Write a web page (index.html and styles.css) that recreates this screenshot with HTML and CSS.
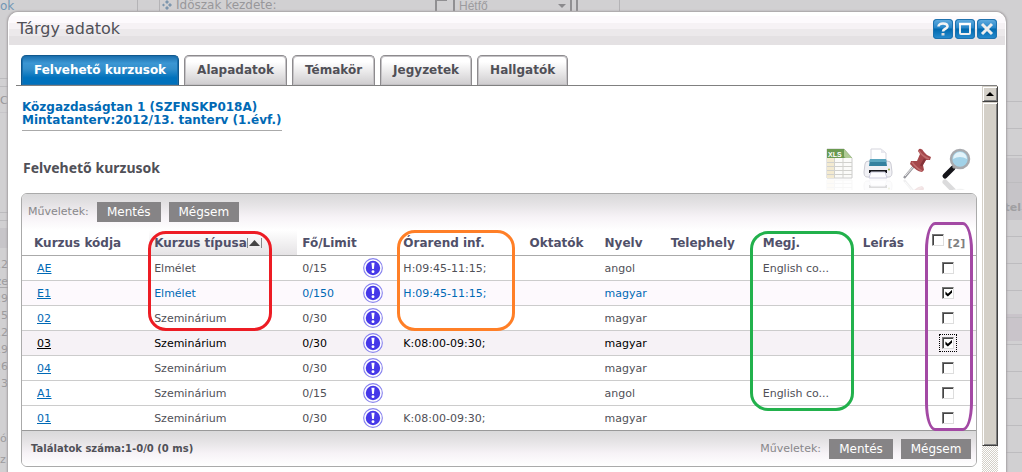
FILE: index.html
```html
<!DOCTYPE html>
<html lang="hu">
<head>
<meta charset="utf-8">
<title>Tárgy adatok</title>
<link rel="stylesheet" href="styles.css">
</head>
<body>
<svg class="defs" aria-hidden="true">
  <symbol id="alert" viewBox="0 0 18 18">
    <circle cx="9" cy="9" r="8.4" fill="#fff" stroke="#8883ee"/>
    <circle cx="9" cy="9" r="6.5" fill="#4638e8"/>
    <path d="M7.6 4.2h2.8L9.8 10H8.2z" fill="#fff"/><circle cx="9" cy="12.3" r="1.3" fill="#fff"/>
  </symbol>
</svg>
<div class="backdrop" aria-hidden="true">
  <span class="ghost blue g-ok">ok</span>
  <span class="vline v1"></span><span class="vline v2"></span>
  <svg class="diamond" viewBox="0 0 10 10"><path d="M5 0l2 2-2 2-2-2zM8 3l2 2-2 2-2-2zM5 6l2 2-2 2-2-2zM1.500 3.500l1.500 1.500-1.500 1.500L0 5z" fill="#7d96ad"/></svg>
  <span class="ghost g-start">Időszak kezdete:</span>
  <span class="ghost-box"></span>
  <span class="ghost-select">Hétfő<i></i></span>
  <span class="vline v3"></span><span class="vline v4"></span>
  <div class="left-strip"><span class="ghost g-c">C</span>
    <div class="dates"><span>12</span><span>ze</span><span>29</span><span>5</span><span>12</span><span>19</span><span>26</span><span>3</span></div>
    <div class="tail"><span>ó</span><span>z</span></div>
  </div>
  <div class="right-strip"><b>tel</b></div>
</div>
<main class="dialog">
  <header class="titlebar">
    <h1>Tárgy adatok</h1>
    <div class="window-buttons">
      <button aria-label="Súgó"><svg viewBox="0 0 20 20"><path d="M5.500 7.500C5.500 3.500 14.500 3.500 14.500 7.500C14.500 10 10 9.500 10 12.500" fill="none" stroke="#f4f4f4" stroke-width="2.600"/><path d="M8.500 14h3v2.500h-3z" fill="#ddd"/></svg></button>
      <button aria-label="Teljes méret"><svg viewBox="0 0 20 20"><rect x="5" y="5" width="10" height="10" rx="1" fill="none" stroke="#eee" stroke-width="2"/><path d="M4 5h12" stroke="#fff" stroke-width="2.500"/></svg></button>
      <button aria-label="Bezárás"><svg viewBox="0 0 20 20"><path d="M5 5l10 10M15 5L5 15" stroke="#eee" stroke-width="3"/></svg></button>
    </div>
  </header>
  <nav class="tabs">
    <button class="tab active">Felvehető kurzusok</button>
    <button class="tab">Alapadatok</button>
    <button class="tab">Témakör</button>
    <button class="tab">Jegyzetek</button>
    <button class="tab">Hallgatók</button>
  </nav>
  <div class="scroller">
    <div class="content">
      <p class="subject">Közgazdaságtan 1 (SZFNSKP018A)<br>Mintatanterv:2012/13. tanterv (1.évf.)</p>
      <div class="section-head">
        <h2>Felvehető kurzusok</h2>
        <div class="tools">
          <button aria-label="Exportálás XLS fájlba"><svg viewBox="0 0 32 42">
            <g id="xls"><path d="M4 1h17l8 9v20H4z" fill="#fbfbf9" stroke="#ccc"/><path d="M4 10h7v20H4z" fill="#f3ead0"/><path d="M4 14.500h25M4 18.500h25M4 22.500h25M4 26.500h25M11.500 10v20M20 10v20" stroke="#d1d1cd" fill="none"/><path d="M4 1h17l8 9H4z" fill="#6b9a51"/><path d="M21 1l8 9h-6q-2 0-2-2z" fill="#b0cb96"/></g>
            <text x="5" y="8.500" class="xls-label">XLS</text><use href="#xls" transform="matrix(1 0 0 -1 0 62)" class="mirror"/></svg></button>
          <button aria-label="Nyomtatás"><svg viewBox="0 0 32 42">
            <g id="printer"><path d="M9 14V1h10l5 4v9z" fill="#fff" stroke="#d5d5dd"/><path d="M19 1v4h5" fill="#e8e8ee"/><path d="M3 16q0-3 4-3h18q4 0 4 3l1 8q0 5-3 5H5q-3 0-3-5z" fill="#f1f1f5" stroke="#ccccd4"/><path d="M8 11h16l1 7H7z" fill="#34819f"/><path d="M8 11h16l.5 3h-17z" fill="#5ba6bf"/><path d="M7 22h18v3H7z" fill="#17181d"/><path d="M9 24h14l2 6H7z" fill="#fdfdff" stroke="#ccd"/><circle cx="27" cy="21.500" r="1" fill="#96a83c"/></g>
            <use href="#printer" transform="matrix(1 0 0 -1 0 62)" class="mirror"/></svg></button>
          <button aria-label="Kitűzés"><svg viewBox="0 0 32 42">
            <g id="pin"><path d="M3 30L13 18" stroke="#98989e" stroke-width="2.400"/><path d="M4 28L13 18" stroke="#eee"/><path d="M18 1q3-1 5 3 3 4 7 5l-1 3-4 0-3 5 1 5-2 2q-6-1-12-8l1-3 6 0 3-7-2-3z" fill="#a4474b"/><path d="M18 3q3 5 10 8M11 14q4 6 10 9" stroke="#c06c6d" fill="none" stroke-width="1.500"/><path d="M24 11l-4 7" stroke="#84333a" stroke-width="2.500"/></g>
            <use href="#pin" transform="matrix(1 0 0 -1 0 62)" class="mirror"/></svg></button>
          <button aria-label="Keresés"><svg viewBox="0 0 32 42">
            <g id="lens"><path d="M5 28l8-8" stroke="#15151a" stroke-width="5" stroke-linecap="round"/><path d="M13 20l3-3" stroke="#999" stroke-width="3"/><circle cx="20" cy="11" r="9" fill="#a2d2e8" stroke="#a8aaae" stroke-width="2.500"/><path d="M13 11a7 7 0 0 1 14 0q-7-4-14 0" fill="#e2f3fa"/></g>
            <use href="#lens" transform="matrix(1 0 0 -1 0 62)" class="mirror"/></svg></button>
        </div>
      </div>
      <section class="panel">
        <div class="toolbar"><span>Műveletek:</span><button class="action">Mentés</button><button class="action">Mégsem</button></div>
        <table class="courses">
          <colgroup><col class="c-code"><col class="c-type"><col class="c-limit"><col class="c-info"><col class="c-time"><col class="c-teacher"><col class="c-lang"><col class="c-site"><col class="c-note"><col class="c-desc"><col class="c-pick"></colgroup>
          <thead><tr><th class="code">Kurzus kódja</th><th class="sorted">Kurzus típusa<svg class="sort" viewBox="0 0 15 12"><path d="M.5 1v10M14.500 1v10" stroke="#888"/><path d="M2 9h11L7.500 3z" fill="#444"/></svg></th><th>Fő/Limit</th><th></th><th>Órarend inf.</th><th>Oktatók</th><th>Nyelv</th><th>Telephely</th><th>Megj.</th><th>Leírás</th><th class="pick all"><input type="checkbox" aria-label="Összes kijelölése"><span>[2]</span></th></tr></thead>
          <tbody>
            <tr><td class="code"><a href="#ae">AE</a></td><td>Elmélet</td><td>0/15</td><td class="info"><svg><use href="#alert"/></svg></td><td>H:09:45-11:15;</td><td></td><td>angol</td><td></td><td>English co...</td><td></td><td class="pick"><input type="checkbox" aria-label="AE"></td></tr>
            <tr class="chosen"><td class="code"><a href="#e1">E1</a></td><td>Elmélet</td><td>0/150</td><td class="info"><svg><use href="#alert"/></svg></td><td>H:09:45-11:15;</td><td></td><td>magyar</td><td></td><td></td><td></td><td class="pick"><input type="checkbox" aria-label="E1" checked></td></tr>
            <tr><td class="code"><a href="#02">02</a></td><td>Szeminárium</td><td>0/30</td><td class="info"><svg><use href="#alert"/></svg></td><td></td><td></td><td>magyar</td><td></td><td></td><td></td><td class="pick"><input type="checkbox" aria-label="02"></td></tr>
            <tr class="current"><td class="code"><a href="#03">03</a></td><td>Szeminárium</td><td>0/30</td><td class="info"><svg><use href="#alert"/></svg></td><td>K:08:00-09:30;</td><td></td><td>magyar</td><td></td><td></td><td></td><td class="pick"><input type="checkbox" aria-label="03" checked></td></tr>
            <tr><td class="code"><a href="#04">04</a></td><td>Szeminárium</td><td>0/30</td><td class="info"><svg><use href="#alert"/></svg></td><td></td><td></td><td>magyar</td><td></td><td></td><td></td><td class="pick"><input type="checkbox" aria-label="04"></td></tr>
            <tr><td class="code"><a href="#a1">A1</a></td><td>Szeminárium</td><td>0/15</td><td class="info"><svg><use href="#alert"/></svg></td><td></td><td></td><td>angol</td><td></td><td>English co...</td><td></td><td class="pick"><input type="checkbox" aria-label="A1"></td></tr>
            <tr><td class="code"><a href="#01">01</a></td><td>Szeminárium</td><td>0/30</td><td class="info"><svg><use href="#alert"/></svg></td><td>K:08:00-09:30;</td><td></td><td>magyar</td><td></td><td></td><td></td><td class="pick"><input type="checkbox" aria-label="01"></td></tr>
          </tbody>
        </table>
        <footer class="toolbar bottom"><strong>Találatok száma:1-0/0 (0 ms)</strong><span>Műveletek:</span><button class="action">Mentés</button><button class="action">Mégsem</button></footer>
        <i class="mark red"></i><i class="mark orange"></i><i class="mark green"></i><i class="mark purple"></i>
      </section>
    </div>
    <div class="scrollbar"><button class="up" aria-label="Fel"></button><div class="thumb"></div></div>
  </div>
</main>
</body>
</html>
```
FILE: styles.css
```css
* { box-sizing: border-box; }
body {
  margin: 0;
  height: 100vh;
  overflow: hidden;
  display: flex;
  padding: 12px 16px 0 8px;
  background: #d1d0d2;
  font: 12px/14px "DejaVu Sans", Verdana, sans-serif;
  color: #505057;
}
button { font: inherit; border: 0; padding: 0; }
h1, h2, p { margin: 0; }
.defs { position: absolute; width: 0; height: 0; }

.backdrop { position: absolute; inset: 0; overflow: hidden; color: #9c9b9e; }
.backdrop > * { position: absolute; }
.ghost { color: #98979a; }
.ghost.blue { color: #7297b5; }
.g-ok { left: 0; top: -1px; }
.g-start { left: 176px; top: -2px; }
.diamond { left: 162px; top: 0; width: 10px; height: 10px; }
.vline { top: 0; width: 1px; height: 11px; background: #b4b3b6; }
.v1 { left: 137px; }
.v2 { left: 159px; }
.v3 { left: 576px; width: 2px; background: #908f92; }
.v4 { left: 619px; }
.ghost-box { left: 435px; top: 0; width: 12px; height: 11px; border: solid #908f92; border-width: 1px 0 0 2px; }
.ghost-select { left: 453px; top: -2px; width: 119px; height: 13px; padding-left: 4px; border: solid #908f92; border-width: 0 2px; font: 12px/17px "Liberation Sans", sans-serif; color: #9c9b9e; }
.ghost-select i { position: absolute; right: 4px; top: 6px; border: 4px solid transparent; border-top-color: #8b8a8d; }
.left-strip {
  left: 0;
  top: 78px;
  bottom: 0;
  width: 8px;
  display: flex;
  flex-direction: column;
  padding-top: 16px;
  font-size: 11px;
  background: linear-gradient(#bcbbbe 1px, transparent 1px 8px, #bcbbbe 8px 9px, transparent 9px 34px, #c7c5c9 34px 35px, transparent 35px 134px, #bcbbbe 134px 135px, transparent 135px 142px, #bcbbbe 142px 143px, transparent 143px 150px, #c7c5c9 150px 170px, transparent 170px 209px, #aaa9ac 209px 210px, transparent 210px);
}
.dates { display: flex; flex-direction: column; margin-top: 148px; line-height: 17px; align-items: flex-end; }
.tail { display: flex; flex-direction: column; margin-top: 36px; line-height: 21px; }
.right-strip {
  right: 0;
  top: 0;
  bottom: 0;
  width: 16px;
  display: flex;
  justify-content: flex-end;
  padding: 201px 1px 0 0;
  font-size: 11px;
  color: #a09fa2;
  background: repeating-linear-gradient(transparent 0 26px, #bdbcbf 26px 27px) 0 75px / 100% 100% no-repeat, linear-gradient(transparent 158px, #c6c4c8 158px 220px, transparent 220px 314px, #c9c4ca 314px 341px, transparent 341px);
}

.dialog {
  position: relative;
  flex: 1;
  min-width: 0;
  display: flex;
  flex-direction: column;
  background: #fff;
  border-radius: 10px 10px 0 0;
  box-shadow: 0 0 2px 1px #a5a0a3;
}
.titlebar {
  display: flex;
  justify-content: space-between;
  align-items: center;
  height: 33px;
  padding: 0 8px;
  margin: 0 1px;
  border-radius: 9px 9px 0 0;
  background: linear-gradient(#fff 0 4px, #fdfafd 4px 11px, #f6f2f5 11px 17px, #ece9eb 17px 24px, #e4e1e3 24px);
}
.titlebar h1 { font-size: 16px; line-height: 20px; font-weight: normal; }
.window-buttons { display: flex; gap: 2px; }
.window-buttons button { width: 20px; height: 20px; border-radius: 4px; background: linear-gradient(#65aee0, #2585c9 45%, #0068ad 50%, #2a8ed1); box-shadow: inset 0 0 0 1px #1e72ae; }
.window-buttons svg { display: block; width: 20px; height: 20px; }

.tabs { display: flex; gap: 5px; margin: 10px 9px 0 8px; padding-left: 5px; border-bottom: 1px solid #808080; }
.tab {
  height: 30px;
  padding: 0 12px 2px;
  border: 1px solid #8d8b8e;
  border-width: 1px 1px 0;
  border-radius: 5px 5px 0 0;
  box-shadow: inset 0 0 0 1px #c4c2c5;
  background: linear-gradient(#fff 20%, #ceccce);
  color: #505057;
  font-size: 12px;
  font-weight: bold;
}
.tab.active { color: #fff; background: linear-gradient(#1b6fae, #3b96d3 25%, #348fcb 45%, #0071bc 75%, #0071bc); border-color: #10588e; box-shadow: inset 0 0 0 1px #1a70ae; }

.scroller { flex: 1; min-height: 0; display: flex; margin-right: 8px; }
.content { flex: 1; min-width: 0; padding: 15px 5px 0 13px; overflow: hidden; }
.subject { width: fit-content; padding-bottom: 3px; border-bottom: 1px solid #aaa; font-size: 12px; line-height: 13px; font-weight: bold; color: #0069b5; margin-left: 1px; }
.section-head { display: flex; justify-content: space-between; align-items: flex-start; margin: 16px 5px 3px 2px; }
.section-head h2 { font-size: 14px; line-height: 18px; margin-top: 12px; font-family: "Noto Sans", sans-serif; }
.tools { display: flex; gap: 7px; }
.tools button { background: none; width: 32px; height: 43px; }
.tools svg { display: block; width: 32px; height: 42px; }
.mirror { opacity: 0.150; }
.xls-label { font: bold 7px "Liberation Sans", sans-serif; fill: #fff; }

.panel { position: relative; border: 1px solid #aaa; border-radius: 6px; }
.toolbar { display: flex; align-items: center; height: 36px; padding: 0 6px; border-radius: 5px 5px 0 0; background: linear-gradient(#d9d9da, #e3e1e3 25%, #f7f3f7 65%, #fff); color: #88878a; font-size: 11px; }
.action { height: 20px; width: 70px; margin-left: 8px; background: #868486; color: #fff; font-size: 12px; }
.action:nth-of-type(1) { width: 64px; }
.action + .action { margin-left: 8px; }
.bottom { border-top: 1px solid #999; border-radius: 0 0 5px 5px; padding: 0 5px 0 9px; }
.bottom strong { margin-right: auto; color: #505057; font-size: 10px; }

.courses { width: 100%; table-layout: fixed; border-collapse: collapse; font-size: 11px; }
.c-code { width: 127px; } .c-type { width: 148px; } .c-limit { width: 64px; } .c-info { width: 37px; }
.c-time { width: 126px; } .c-teacher { width: 75px; } .c-lang { width: 66px; } .c-site { width: 92px; }
.c-note { width: 100px; } .c-desc { width: 65px; } .c-pick { width: 53px; }
.courses th, .courses td { height: 25px; padding: 2px 0 0 5px; text-align: left; border-bottom: 1px solid #ccc; white-space: nowrap; }
.courses th { color: #505069; border-bottom-color: #aaa; font-size: 12px; }
.courses th.code { padding-left: 12px; }
.courses td.code { padding-left: 15px; }
.courses tr:last-child td { border-bottom: 0; }
.sorted { background: linear-gradient(#fff, #e5e3e5); }
.sort { width: 15px; height: 12px; vertical-align: -2px; }
.courses a { color: #0069b5; }
.chosen { background: #fdf9fd; color: #0069b5; }
.current, .current a { background: #f6f2f6; color: #000; }
.courses .info { padding: 0; }
.info svg { display: block; width: 20px; height: 20px; margin-left: 2px; }
.courses .pick { padding: 3px 2px 0 0; text-align: center; }
.courses .all { padding: 0 2px 0 0; color: #808080; font-size: 11px; }
.all span { margin-left: 4px; vertical-align: -2px; }
.pick input { appearance: none; width: 12px; height: 12px; margin: 0; vertical-align: -1px; background: #fff; border: 1px solid; border-color: #777 #ddd #ddd #777; box-shadow: inset 1px 1px #444; }
.pick input:checked::before { content: ""; display: block; width: 7px; height: 7px; margin: 2px; background: #000; clip-path: polygon(0 30%, 35% 60%, 100% 0, 100% 40%, 35% 100%, 0 70%); }
.current .pick input { outline: 1px dotted #000; outline-offset: 2px; }

.mark { position: absolute; border: 3px solid; border-radius: 18px; pointer-events: none; }
.red { left: 126px; top: 37px; width: 124px; height: 100px; border-color: #ed1c24; }
.orange { left: 375px; top: 36px; width: 118px; height: 101px; border-color: #ff7f27; }
.green { left: 728px; top: 37px; width: 104px; height: 180px; border-color: #22b14c; }
.purple { left: 903px; top: 28px; width: 48px; height: 209px; border-color: #a349a4; border-radius: 10px / 28px; }

.scrollbar { width: 16px; display: flex; flex-direction: column; background: repeating-conic-gradient(#d4d0c8 0 25%, #fff 0 50%) 0 0 / 2px 2px; }
.up, .thumb { background: #d4d0c8; border: 1px solid; border-color: #d4d0c8 #404040 #404040 #d4d0c8; box-shadow: inset 1px 1px #fff, inset -1px -1px #808080; }
.up { height: 16px; display: grid; place-items: center; }
.up::before { content: ""; border: 4px solid transparent; border-top: 0; border-bottom-color: #000; }
.thumb { height: 89%; }
```
